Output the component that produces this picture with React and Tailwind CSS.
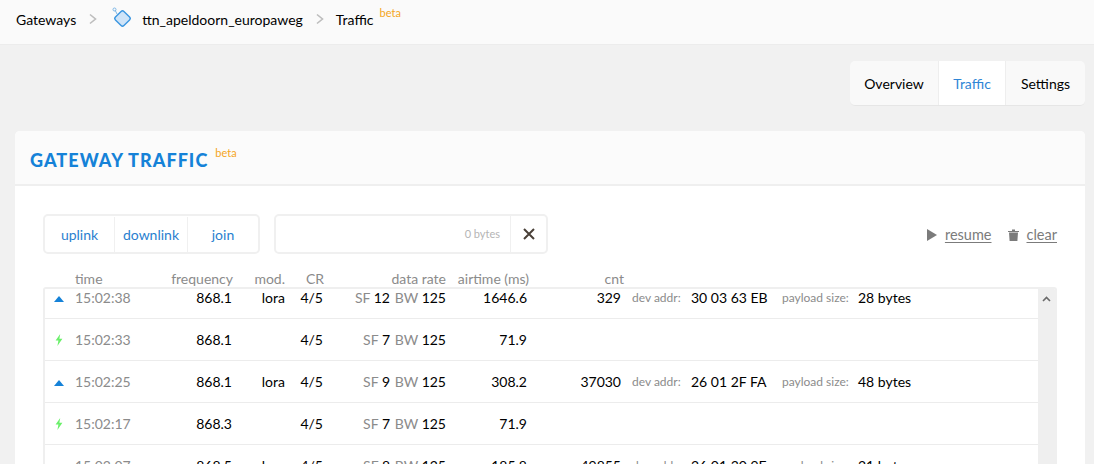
import React from "react";

const Up = () => (
  <svg width="10" height="6" viewBox="0 0 10 6" className="mt-[2px] block"><path d="M5 0 L10 6 H0 Z" fill="#1582d8" /></svg>
);
const Bolt = () => (
  <svg width="8" height="12" viewBox="0 0 8 12" className="block"><path d="M5.2 0 L0.6 6.6 H3.4 L2.4 12 L7.4 4.8 H4.4 Z" fill="#6bf06b" /></svg>
);

const rows = [
  { t: "up", time: "15:02:38", f: "868.1", m: "lora", sf: "12", air: "1646.6", cnt: "329", addr: "30 03 63 EB", size: "28 bytes" },
  { t: "join", time: "15:02:33", f: "868.1", m: "", sf: "7", air: "71.9" },
  { t: "up", time: "15:02:25", f: "868.1", m: "lora", sf: "9", air: "308.2", cnt: "37030", addr: "26 01 2F FA", size: "48 bytes" },
  { t: "join", time: "15:02:17", f: "868.3", m: "", sf: "7", air: "71.9" },
  { t: "up", time: "15:02:07", f: "868.5", m: "lora", sf: "8", air: "185.8", cnt: "49855", addr: "26 01 30 9F", size: "21 bytes" },
];

function Row({ r }) {
  return (
    <div className="flex items-center h-[42px] pt-[1px] border-b border-[#ececec] text-[14px] leading-[20px] text-black whitespace-nowrap">
      <div className="w-[30px] flex justify-end pr-[11px]">{r.t === "up" ? <Up /> : <div className="mr-[1px]"><Bolt /></div>}</div>
      <div className="w-[61px] text-[#8b8b8b]">{r.time}</div>
      <div className="w-[96px] text-right">{r.f}</div>
      <div className="w-[53px] text-right">{r.m}</div>
      <div className="w-[38px] text-right">4/5</div>
      <div className="w-[67px] text-right"><span className="text-[#8b8b8b]">SF</span> {r.sf}</div>
      <div className="w-[56px] text-right"><span className="text-[#8b8b8b]">BW</span> 125</div>
      <div className="w-[81px] text-right">{r.air}</div>
      <div className="w-[94px] text-right">{r.cnt}</div>
      {r.addr && (
        <>
          <div className="w-[59px] ml-[11px] text-[12px] text-[#8b8b8b]">dev addr:</div>
          <div className="w-[91px]">{r.addr}</div>
          <div className="w-[76px] text-[12px] text-[#8b8b8b]">payload size:</div>
          <div>{r.size}</div>
        </>
      )}
    </div>
  );
}

function Beta({ className }) {
  return <span className={"text-[11px] leading-none text-[#f5a623] " + className}>beta</span>;
}

export default function App() {
  return (
    <div className="h-[464px] overflow-hidden bg-[#f1f1f1] font-['Lato',sans-serif] text-[14px]">
      <header className="flex h-[45px] items-center border-b border-[#ececec] bg-[#fafafa] pl-4 pb-[6px] text-black">
        <span>Gateways</span>
        <svg width="8" height="12" viewBox="0 0 8 12" className="ml-[13px]" fill="none" stroke="#bdbdbd" strokeWidth="1.6"><path d="M1 1.5 L6.5 6 L1 10.5" /></svg>
        <svg width="21" height="22" viewBox="0 0 21 22" className="ml-[15px] -mt-[2px]" fill="none">
          <path d="M3 3 L5 7" stroke="#7db7e6" strokeWidth="1" />
          <circle cx="2.5" cy="2.5" r="1.5" stroke="#7db7e6" strokeWidth="1" />
          <rect x="4.5" y="5.5" width="12" height="12" rx="2" transform="rotate(45 10.5 11.5)" fill="#cfe4f8" stroke="#3b96e0" strokeWidth="1.4" />
        </svg>
        <span className="ml-[9px]">ttn_apeldoorn_europaweg</span>
        <svg width="8" height="12" viewBox="0 0 8 12" className="ml-[13px]" fill="none" stroke="#bdbdbd" strokeWidth="1.6"><path d="M1 1.5 L6.5 6 L1 10.5" /></svg>
        <span className="ml-[12px]">Traffic</span>
        <Beta className="ml-[6px] -mt-[14px]" />
      </header>

      <div className="flex justify-end pr-[9px] pt-[16px]">
        <div className="flex h-[45px] overflow-hidden rounded-[5px] border-b border-[#e6e6e6] bg-[#f9f9f9] text-black">
          <div className="flex w-[88px] items-center justify-center">Overview</div>
          <div className="flex w-[68px] items-center justify-center border-x border-[#eeeeee] bg-white text-[#2f86d6]">Traffic</div>
          <div className="flex w-[79px] items-center justify-center">Settings</div>
        </div>
      </div>

      <div className="ml-[15px] mr-[9px] mt-[25px] overflow-hidden rounded-t-[5px] bg-white">
        <div className="flex h-[55px] items-center border-b-2 border-[#efefef] bg-[#fbfbfb] pl-[15px] pt-[5px]">
          <span className="text-[18px] font-black tracking-[1.05px] text-[#1582d8]">GATEWAY TRAFFIC</span>
          <Beta className="ml-[7px] -mt-[16px]" />
        </div>

        <div className="px-[28px] pt-[28px]">
          <div className="flex h-[40px] items-center">
            <div className="flex h-[40px] w-[217px] rounded-[5px] border-2 border-[#f0f0f0] pt-[1px] text-[#2a7fcf]">
              <div className="flex w-[70px] items-center justify-center border-r border-[#f0f0f0]">uplink</div>
              <div className="flex w-[73px] items-center justify-center border-r border-[#f0f0f0]">downlink</div>
              <div className="flex flex-1 items-center justify-center">join</div>
            </div>
            <div className="ml-[14px] flex h-[40px] w-[274px] rounded-[5px] border-2 border-[#f0f0f0]">
              <div className="flex flex-1 items-center justify-end border-r border-[#f0f0f0] pr-[10px] text-[11px] text-[#b5b5b5]">0 bytes</div>
              <div className="flex w-[35px] items-center justify-center">
                <svg width="12" height="12" viewBox="0 0 12 12" stroke="#4a4038" strokeWidth="2" fill="none"><path d="M1 1 L11 11 M11 1 L1 11" /></svg>
              </div>
            </div>
            <div className="ml-auto flex items-center pt-[1px] text-[14.5px] text-[#7b7b7b]">
              <svg width="10" height="12" viewBox="0 0 10 12"><path d="M0 0 L10 6 L0 12 Z" fill="#7b7b7b" /></svg>
              <span className="ml-[8px] underline underline-offset-2">resume</span>
              <svg width="11" height="12" viewBox="0 0 11 12" className="ml-[16px]" fill="#7b7b7b"><path d="M0 2 H11 V3 H0 Z M4 0.5 H7 V2 H4 Z M1 3.5 H10 L9.4 12 H1.6 Z" /></svg>
              <span className="ml-[8px] underline underline-offset-2">clear</span>
            </div>
          </div>

          <div className="flex h-[33px] items-center pt-[16px] text-[14px] whitespace-nowrap text-[#8b8b8b]">
            <div className="w-[32px]" />
            <div className="w-[60px]">time</div>
            <div className="w-[98px] text-right">frequency</div>
            <div className="w-[52px] text-right">mod.</div>
            <div className="w-[39px] text-right">CR</div>
            <div className="w-[122px] text-right">data rate</div>
            <div className="w-[83px] text-right">airtime (ms)</div>
            <div className="w-[95px] text-right">cnt</div>
          </div>

          <div className="flex h-[200px] overflow-hidden rounded-t-[3px] border-x-2 border-t-2 border-[#efefef]">
            <div className="min-w-0 flex-1 overflow-hidden">
              <div className="-mt-[12px]">
                {rows.map((r) => <Row key={r.time} r={r} />)}
              </div>
            </div>
            <div className="w-[17px] bg-[#efefef] pt-[7px]">
              <svg width="9" height="6" viewBox="0 0 9 6" className="ml-[4px]" fill="none" stroke="#6b6b6b" strokeWidth="1.6"><path d="M1 5 L4.5 1.5 L8 5" /></svg>
            </div>
          </div>
        </div>
      </div>
    </div>
  );
}
